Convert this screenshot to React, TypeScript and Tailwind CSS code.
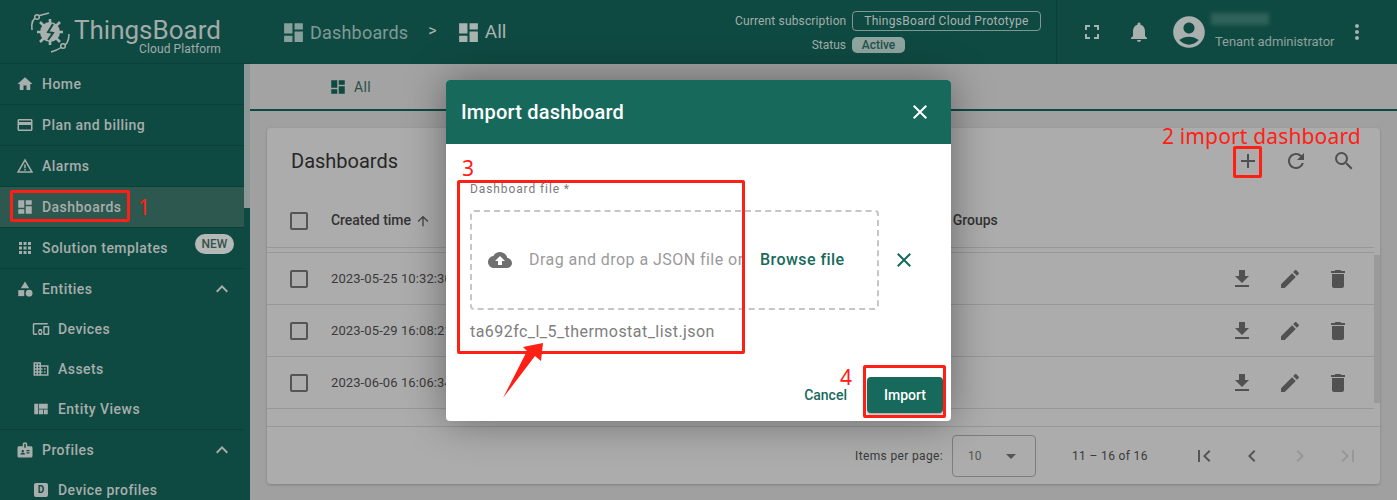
import type { IconType } from "react-icons";
import {
  MdAccountCircle,
  MdAdd,
  MdApps,
  MdArrowDropDown,
  MdArrowUpward,
  MdBadge,
  MdCategory,
  MdCheckBoxOutlineBlank,
  MdChevronLeft,
  MdChevronRight,
  MdClose,
  MdCloudUpload,
  MdCreditCard,
  MdDashboard,
  MdDelete,
  MdDevicesOther,
  MdDomain,
  MdEdit,
  MdExpandLess,
  MdFileDownload,
  MdFirstPage,
  MdFullscreen,
  MdHome,
  MdLastPage,
  MdMoreVert,
  MdNotifications,
  MdRefresh,
  MdSearch,
  MdViewQuilt,
  MdWarningAmber,
} from "react-icons/md";

type NavItem = {
  label: string;
  icon?: IconType;
  child?: boolean;
  active?: boolean;
  divider?: boolean;
  open?: boolean;
  badge?: string;
};

const navItems: NavItem[] = [
  { label: "Home", icon: MdHome, divider: true },
  { label: "Plan and billing", icon: MdCreditCard, divider: true },
  { label: "Alarms", icon: MdWarningAmber, divider: true },
  { label: "Dashboards", icon: MdDashboard, active: true, divider: true },
  { label: "Solution templates", icon: MdApps, badge: "NEW", divider: true },
  { label: "Entities", icon: MdCategory, open: true },
  { label: "Devices", icon: MdDevicesOther, child: true },
  { label: "Assets", icon: MdDomain, child: true },
  { label: "Entity Views", icon: MdViewQuilt, child: true, divider: true },
  { label: "Profiles", icon: MdBadge, open: true },
  { label: "Device profiles", child: true },
];

const rows = ["2023-05-25 10:32:30", "2023-05-29 16:08:21", "2023-06-06 16:06:34"];

function Logo() {
  return (
    <svg viewBox="0 0 44 44" className="h-[44px] w-[44px] shrink-0 text-[#a9b0ae]">
      <g fill="none" stroke="currentColor" strokeWidth="1.5">
        <path d="M4 20 C3 13 5 8 10 6 C13 5 17 4 21 3" />
        <circle cx="9" cy="7" r="2.3" fill="#0f4a42" />
        <path d="M41 24 C41 30 39 35 34 37 C31 39 27 41 23 42" />
        <circle cx="35" cy="36" r="2.3" fill="#0f4a42" />
      </g>
      <circle cx="22" cy="22" r="10" fill="currentColor" />
      <g stroke="currentColor" strokeWidth="2.6">
        <path d="M12 12 L32 32 M12 32 L32 12 M22 9 L22 35 M9 22 L35 22" />
      </g>
      <path d="M25 14 L20 22 L25 23 L20 30" fill="none" stroke="#0f4a42" strokeWidth="2" />
    </svg>
  );
}

function Sidebar() {
  return (
    <aside className="flex w-[250px] shrink-0 flex-col bg-[#0f4a42]">
      <div className="flex h-[64px] shrink-0 items-center border-b border-[#0c3f38] pl-[28px]">
        <Logo />
        <div className="ml-[2px] mt-[8px] flex flex-col items-end text-[#a3abaa]">
          <span className="text-[26px] leading-[26px]">ThingsBoard</span>
          <span className="text-[12px] leading-[12px] tracking-[0.1px]">Cloud Platform</span>
        </div>
      </div>
      <div className="relative flex-1 pr-[6px]">
        <div className="absolute right-0 top-0 h-[144px] w-[6px] bg-[#8b9895]" />
        {navItems.map((item) => (
          <div
            key={item.label}
            className={`flex items-center text-[14px] font-medium text-[#a7aead] ${(item.child || item.open) && !item.divider ? "h-[40px]" : "h-[41px]"} ${item.child ? "pl-[32px]" : "pl-[16px]"} ${item.active ? "bg-[#2d5850]" : ""} ${item.divider ? "border-b border-[#0c3f38]" : ""}`}
          >
            {item.icon ? (
              <item.icon className="h-[18px] w-[18px] shrink-0" />
            ) : (
              <span className="mx-[2px] flex h-[14px] w-[14px] shrink-0 items-center justify-center rounded-[2px] bg-[#a7aead] text-[10px] font-bold leading-none text-[#0f4a42]">
                D
              </span>
            )}
            <span className="ml-[8px] tracking-[0.45px]">{item.label}</span>
            {item.open && <MdExpandLess className="ml-auto mr-[10px] h-[24px] w-[24px]" />}
            {item.badge && (
              <span className="mb-[9px] ml-auto mr-[10px] flex h-[20px] w-[39px] items-center justify-center rounded-full bg-[#b4b9b7] text-[12px] text-[#37504b]">
                {item.badge}
              </span>
            )}
          </div>
        ))}
      </div>
    </aside>
  );
}

function Header() {
  return (
    <header className="flex h-[64px] shrink-0 items-center bg-[#0f4a42]">
      <div className="flex items-center pl-[31px]">
        <MdDashboard className="h-[25px] w-[25px] text-[#86a09b]" />
        <span className="ml-[4px] text-[18px] tracking-[0.2px] text-[#7f9a95]">Dashboards</span>
        <span className="mb-[3px] ml-[20px] text-[16px] text-[#a9b7b4]">&gt;</span>
        <MdDashboard className="ml-[19px] h-[25px] w-[25px] text-[#a9b3b1]" />
        <span className="ml-[4px] text-[19px] text-[#a9b3b1]">All</span>
      </div>
      <div className="ml-auto flex h-full flex-col justify-center gap-[5px] pr-[15px] text-[12px] text-[#a3adab]">
        <div className="flex items-center">
          <span className="w-[111px] whitespace-nowrap text-right tracking-[0.15px]">Current subscription</span>
          <span className="ml-[6px] flex h-[20px] w-[189px] items-center justify-center rounded-[4px] border border-[#7f9792] tracking-[0.3px] text-[#a9b3b1]">
            ThingsBoard Cloud Prototype
          </span>
        </div>
        <div className="flex items-center">
          <span className="w-[111px] text-right">Status</span>
          <span className="ml-[6px] flex h-[16px] w-[53px] items-center justify-center rounded-[5px] bg-[#8fa5a0] font-medium text-[#25504a]">
            Active
          </span>
        </div>
      </div>
      <div className="flex h-full w-[341px] items-center border-l border-[#0c3f38] pl-[23px] text-[#a9b0ae]">
        <MdFullscreen className="h-[24px] w-[24px]" />
        <MdNotifications className="ml-[23px] h-[24px] w-[24px]" />
        <MdAccountCircle className="ml-[19px] h-[38px] w-[38px]" />
        <div className="ml-[7px] flex flex-col">
          <span className="mb-[7px] ml-[-4px] h-[12px] w-[58px] bg-[#2f625a] blur-[2px]" />
          <span className="text-[13px] tracking-[-0.05px] text-[#8fa19d]">Tenant administrator</span>
        </div>
        <MdMoreVert className="ml-[11px] h-[24px] w-[24px]" />
      </div>
    </header>
  );
}

function DashboardsCard() {
  return (
    <div className="mx-[17px] mt-[17px] flex h-[356px] flex-col rounded-[4px] bg-[#acacac] shadow-[0_1px_3px_rgba(0,0,0,0.2)]">
      <div className="flex h-[67px] shrink-0 items-center pb-[1px] pl-[24px] pr-[24px] text-[#4f4f4f]">
        <span className="text-[20px] text-[#272727]">Dashboards</span>
        <MdAdd className="ml-auto h-[24px] w-[24px]" />
        <MdRefresh className="ml-[24px] h-[24px] w-[24px]" />
        <MdSearch className="ml-[24px] h-[24px] w-[24px]" />
      </div>
      <div className="mr-[6px] flex h-[53px] shrink-0 items-center border-b border-[#979797] pb-[1px] pl-[20px]">
        <MdCheckBoxOutlineBlank className="h-[24px] w-[24px] text-[#555]" />
        <span className="ml-[20px] text-[14px] font-medium tracking-[-0.05px] text-[#333]">Created time</span>
        <MdArrowUpward className="ml-[4px] h-[16px] w-[16px] text-[#444]" />
        <span className="ml-[522px] text-[14px] font-medium tracking-[-0.05px] text-[#333]">Groups</span>
      </div>
      <div className="relative h-[178px] shrink-0 pt-[4px]">
        {rows.map((row) => (
          <div key={row} className="mr-[6px] flex h-[52px] items-center border-b border-[#979797] pl-[20px] first:h-[53px] first:border-t">
            <MdCheckBoxOutlineBlank className="h-[24px] w-[24px] text-[#555]" />
            <span className="ml-[20px] text-[13px] tracking-[0.1px] text-[#3a3a3a]">{row}</span>
            <div className="ml-auto flex gap-[24px] pr-[24px] text-[#515151]">
              <MdFileDownload className="h-[24px] w-[24px]" />
              <MdEdit className="h-[24px] w-[24px]" />
              <MdDelete className="h-[24px] w-[24px]" />
            </div>
          </div>
        ))}
        <div className="absolute right-0 top-[7px] h-[148px] w-[6px] bg-[#9a9a9a]" />
      </div>
      <div className="flex flex-1 items-center border-t border-[#979797] pr-[20px] text-[12px] text-[#3a3a3a]">
        <span className="ml-auto tracking-[0.35px]">Items per page:</span>
        <div className="ml-[9px] flex h-[42px] w-[84px] items-center rounded-[4px] border border-[#7d7d7d] pl-[15px] pr-[12px] text-[#555]">
          10
          <MdArrowDropDown className="ml-auto h-[24px] w-[24px]" />
        </div>
        <span className="ml-[36px] w-[96px] tracking-[0.35px]">11 – 16 of 16</span>
        <div className="ml-[24px] flex gap-[24px]">
          <MdFirstPage className="h-[24px] w-[24px] text-[#555]" />
          <MdChevronLeft className="h-[24px] w-[24px] text-[#555]" />
          <MdChevronRight className="h-[24px] w-[24px] text-[#979797]" />
          <MdLastPage className="h-[24px] w-[24px] text-[#979797]" />
        </div>
      </div>
    </div>
  );
}

function ImportDialog() {
  return (
    <div className="absolute left-[446px] top-[80px] flex h-[341px] w-[505px] flex-col overflow-hidden rounded-[4px] bg-white shadow-[0_0_40px_rgba(0,0,0,0.4)]">
      <div className="flex h-[64px] shrink-0 items-center bg-[#17695c] pl-[15px] pr-[19px] text-white">
        <h2 className="text-[20px] font-medium tracking-[0.2px]">Import dashboard</h2>
        <MdClose className="ml-auto h-[24px] w-[24px]" />
      </div>
      <div className="flex flex-1 flex-col px-[24px]">
        <label className="mt-[38px] text-[12px] leading-[14px] tracking-[0.9px] text-[#7b7b7b]">Dashboard file *</label>
        <div className="mt-[14px] flex items-center">
          <div className="flex h-[100px] w-[409px] items-center rounded-[4px] border-2 border-dashed border-[#c6c6c6] pl-[16px]">
            <MdCloudUpload className="h-[24px] w-[24px] text-[#6f6f6f]" />
            <span className="ml-[17px] w-[215px] overflow-hidden whitespace-nowrap text-[16px] tracking-[0.45px] text-[#9a9a9a]">
              Drag and drop a JSON file or
            </span>
            <span className="ml-[16px] text-[16px] font-medium tracking-[0.45px] text-[#17695c]">Browse file</span>
          </div>
          <MdClose className="ml-[13px] h-[24px] w-[24px] text-[#17695c]" />
        </div>
        <p className="mt-[10px] text-[16px] tracking-[0.45px] text-[#7e7e7e]">ta692fc_l_5_thermostat_list.json</p>
        <div className="-mr-[16px] mb-[8px] mt-auto flex items-center justify-end">
          <span className="mr-[20px] text-[14px] font-medium text-[#17695c]">Cancel</span>
          <button className="h-[36px] w-[76px] rounded-[4px] bg-[#17695c] text-[14px] font-medium text-white shadow-[0_2px_3px_rgba(0,0,0,0.35)]">
            Import
          </button>
        </div>
      </div>
    </div>
  );
}

function Annotations() {
  const box = "absolute rounded-[2px] border-[3px] border-[#ff2015]";
  const note = "absolute font-['Noto_Sans',sans-serif] leading-none text-[#ff2015]";
  return (
    <>
      <div className={`${box} left-[10px] top-[190px] h-[32px] w-[120px]`} />
      <span className={`${note} left-[138px] top-[197px] text-[21px]`}>1</span>
      <span className={`${note} left-[1162px] top-[126px] text-[21px] tracking-[0.15px]`}>2 import dashboard</span>
      <div className={`${box} left-[1233px] top-[146px] h-[32px] w-[29px]`} />
      <span className={`${note} left-[462px] top-[158px] text-[21px]`}>3</span>
      <div className={`${box} left-[457px] top-[180px] h-[174px] w-[288px]`} />
      <span className={`${note} left-[840px] top-[367px] text-[21px]`}>4</span>
      <div className={`${box} left-[863px] top-[365px] h-[53px] w-[83px]`} />
      <svg className="absolute left-[500px] top-[340px] h-[60px] w-[46px]" viewBox="0 0 46 60">
        <path d="M43 3 L41 21 L35 16 L3 58 L27 11 L23 7 Z" fill="#ff2015" />
      </svg>
    </>
  );
}

export default function App() {
  return (
    <div className="relative flex h-[500px] w-[1397px] overflow-hidden bg-[#a0a0a0] font-['Roboto',sans-serif]">
      <Sidebar />
      <div className="flex min-w-0 flex-1 flex-col">
        <Header />
        <div className="flex h-[47px] shrink-0 border-b-2 border-[#0f4a42] bg-[#a3a3a3]">
          <div className="flex w-[200px] items-center justify-center pt-[1px] text-[14px] tracking-[0.3px] text-[#2c4f4a]">
            <MdDashboard className="h-[18px] w-[18px] text-[#0f4a42]" />
            <span className="ml-[7px]">All</span>
          </div>
        </div>
        <DashboardsCard />
      </div>
      <ImportDialog />
      <Annotations />
    </div>
  );
}
